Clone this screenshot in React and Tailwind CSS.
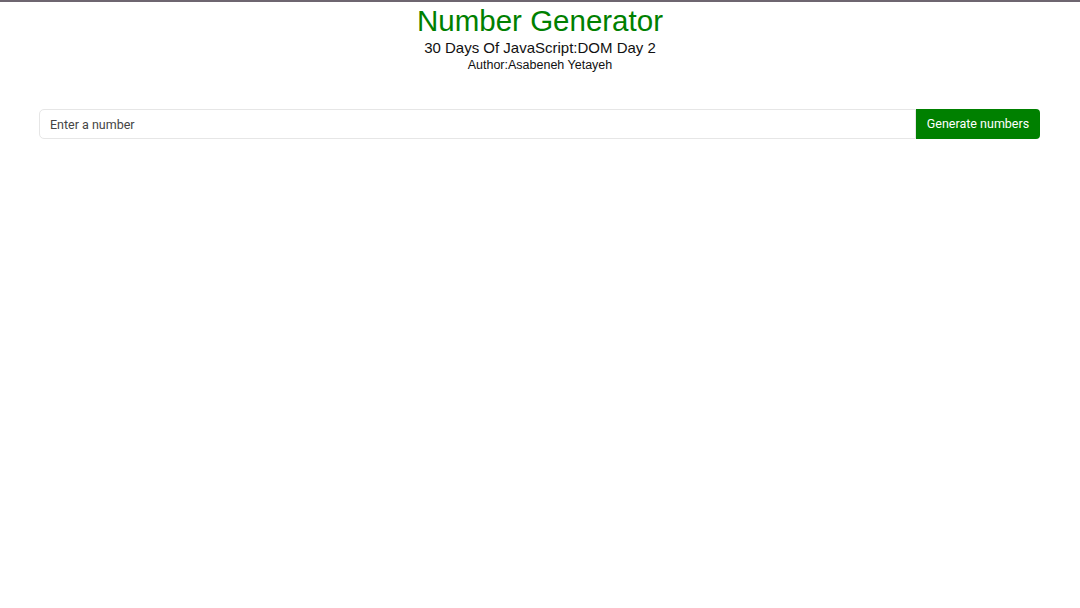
import React from "react";

const App = () => {
  return (
    <div className="min-h-[608px] bg-white border-t-2 border-[#6e6670] font-['Liberation_Sans',Arial,sans-serif]">
      {/* ── Header ─────────────────────────────── */}
      <header className="flex flex-col items-center">
        <h1 className="text-[29.5px] leading-[36px] text-[#008000] mt-[1px]">Number Generator</h1>
        <h2 className="text-[15px] leading-[18px] text-[#111]">30 Days Of JavaScript:DOM Day 2</h2>
        <h3 className="text-[12.5px] leading-[16px] text-[#111]">Author:Asabeneh Yetayeh</h3>
      </header>

      {/* ── Input row ──────────────────────────── */}
      <div className="flex mx-[39px] mt-[36px] w-[1001px]">
        <input
          type="text"
          placeholder="Enter a number"
          className="flex-1 h-[30px] px-[10px] border border-[#e6e6e6] rounded-l-[5px] text-[12.5px] font-['Roboto',sans-serif] placeholder:text-[#444] outline-none"
        />
        <button className="h-[30px] px-[10px] bg-[#008000] text-white text-[12.5px] font-['Roboto',sans-serif] rounded-r-[4px] w-[124px]">
          Generate numbers
        </button>
      </div>
    </div>
  );
};

export default App;
